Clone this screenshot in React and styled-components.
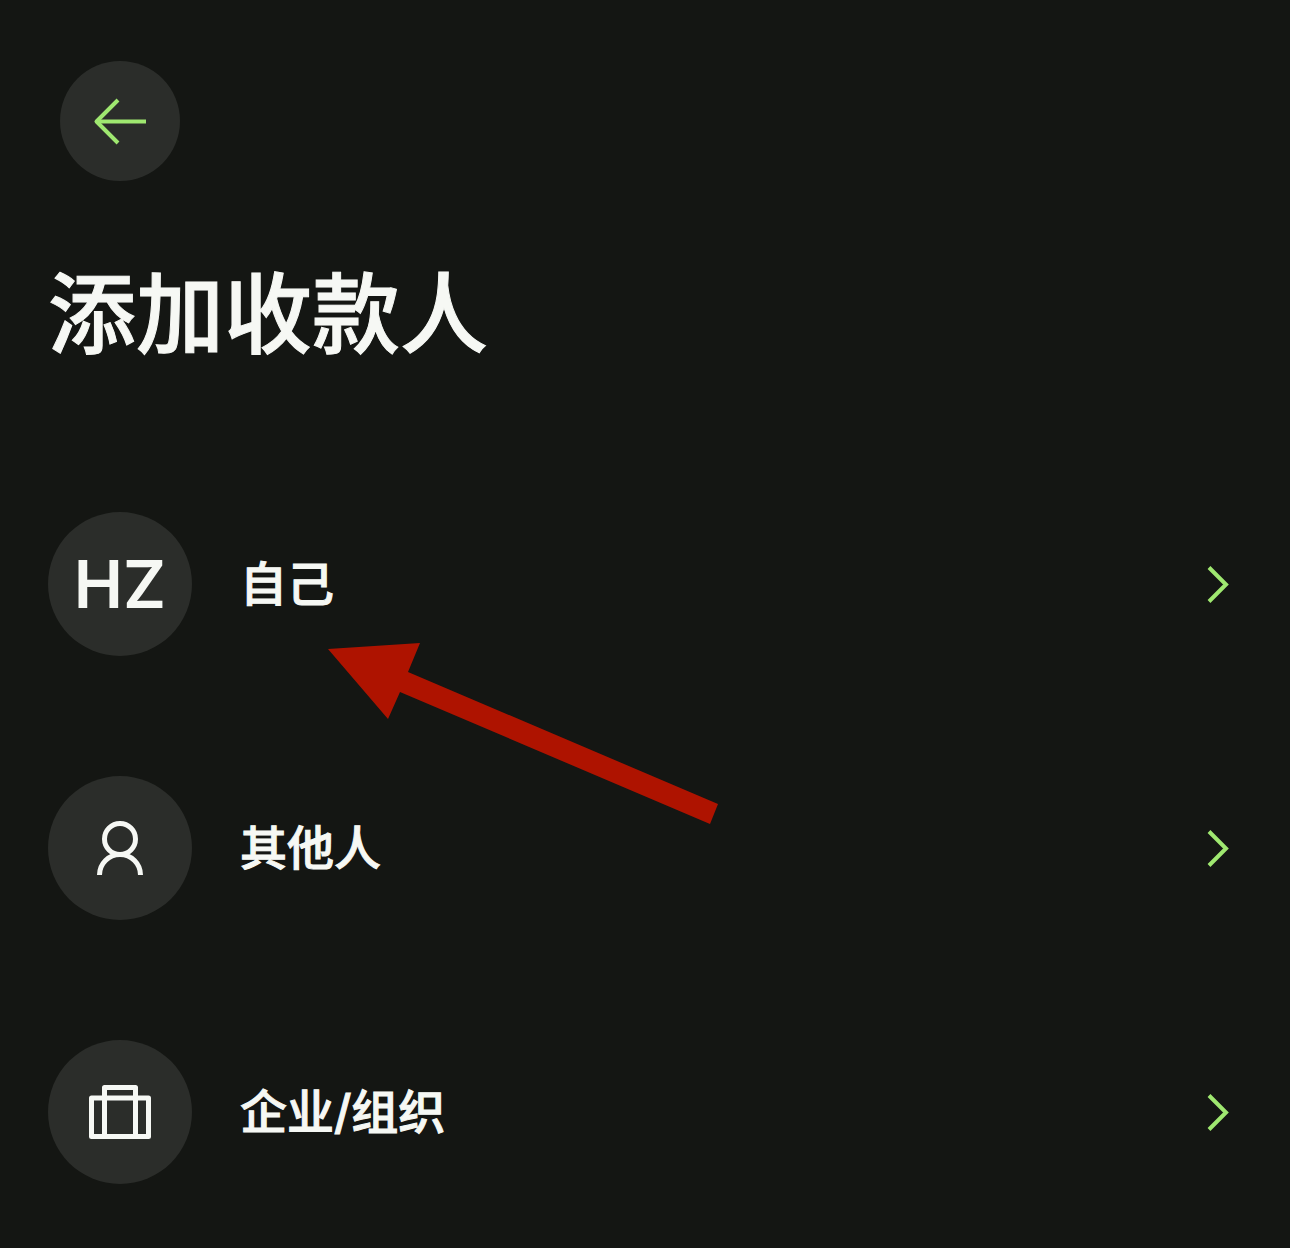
import React from "react";
import styled, { createGlobalStyle } from "styled-components";

const GlobalStyle = createGlobalStyle`
  *, *::before, *::after { box-sizing: border-box; }
  body {
    margin: 0;
    background: #141613;
    color: #f6f8f4;
    font-family: Inter, "Noto Sans CJK SC", sans-serif;
  }
`;

const Page = styled.main`
  padding: 61px 48px 4px;
`;

const BackButton = styled.button`
  display: flex;
  align-items: center;
  justify-content: center;
  width: 120px;
  height: 120px;
  margin: 0 12px;
  padding: 0;
  border: 0;
  border-radius: 50%;
  background: #2b2d2a;
  color: #9fe870;
  cursor: pointer;
`;

const Title = styled.h1`
  margin: 61px 0 78px;
  font-family: "Noto Sans CJK SC", sans-serif;
  font-size: 88px;
  line-height: 132px;
  font-weight: 500;
  -webkit-text-stroke: 1px currentColor;
`;

const List = styled.ul`
  margin: 0;
  padding: 0;
  list-style: none;
`;

const Item = styled.li`
  position: relative;
`;

const Row = styled.button`
  display: flex;
  align-items: center;
  gap: 48px;
  width: 100%;
  padding: 60px 0;
  border: 0;
  background: transparent;
  color: inherit;
  text-align: left;
  cursor: pointer;
`;

const Avatar = styled.span`
  display: flex;
  flex: none;
  align-items: center;
  justify-content: center;
  width: 144px;
  height: 144px;
  border-radius: 50%;
  background: #2b2d2a;
  font-family: Inter, sans-serif;
  font-size: 66px;
  line-height: 80px;
  font-weight: 600;
`;

const Label = styled.span`
  flex: 1;
  font-family: Inter, "Noto Sans CJK SC", sans-serif;
  font-size: 47px;
  line-height: 72px;
  font-weight: 500;
  -webkit-text-stroke: 1px currentColor;
`;

const Icon = styled.svg`
  display: block;
  flex: none;
  width: ${(p) => p.$size}px;
  height: ${(p) => p.$size}px;
  fill: none;
  stroke: ${(p) => p.$color || "currentColor"};
  stroke-width: ${(p) => p.$stroke};
`;

const Pointer = styled.svg`
  position: absolute;
  top: 191px;
  left: 280px;
  width: 391px;
  height: 182px;
  fill: #ae1300;
  pointer-events: none;
`;

const ArrowLeft = () => (
  <Icon $size={72} $stroke={4} viewBox="0 0 72 72" aria-hidden="true">
    <path d="M34 15 12.5 36.5 34 58" strokeLinejoin="round" />
    <path d="M12 36.5H62" />
  </Icon>
);

const Person = () => (
  <Icon $size={72} $stroke={5} viewBox="0 0 72 72" aria-hidden="true">
    <circle cx="36" cy="27" r="15.5" />
    <path d="M15.5 63a20.5 20.5 0 0 1 41 0" />
  </Icon>
);

const Briefcase = () => (
  <Icon $size={72} $stroke={5} viewBox="0 0 72 72" strokeLinejoin="round" aria-hidden="true">
    <rect x="7.5" y="22" width="57" height="38.5" />
    <path d="M20.5 60.5V11.5h31v49" />
  </Icon>
);

const Chevron = () => (
  <Icon $size={48} $stroke={4} $color="#9fe870" viewBox="0 0 48 48" aria-hidden="true">
    <path d="M15 7.5 32 24.5 15 41.5" />
  </Icon>
);

const recipients = [
  { label: "自己", avatar: "HZ", highlighted: true },
  { label: "其他人", avatar: <Person /> },
  { label: "企业/组织", avatar: <Briefcase /> },
];

export default function App() {
  return (
    <>
      <GlobalStyle />
      <Page lang="zh-CN">
        <BackButton type="button" aria-label="返回">
          <ArrowLeft />
        </BackButton>
        <Title>添加收款人</Title>
        <List>
          {recipients.map(({ label, avatar, highlighted }) => (
            <Item key={label}>
              <Row type="button">
                <Avatar>{avatar}</Avatar>
                <Label>{label}</Label>
                <Chevron />
              </Row>
              {highlighted && (
                <Pointer viewBox="0 0 391 182" aria-hidden="true">
                  <path d="M0 6 92 0 80 29 390 161 382 181 72 49 60 76Z" />
                </Pointer>
              )}
            </Item>
          ))}
        </List>
      </Page>
    </>
  );
}
